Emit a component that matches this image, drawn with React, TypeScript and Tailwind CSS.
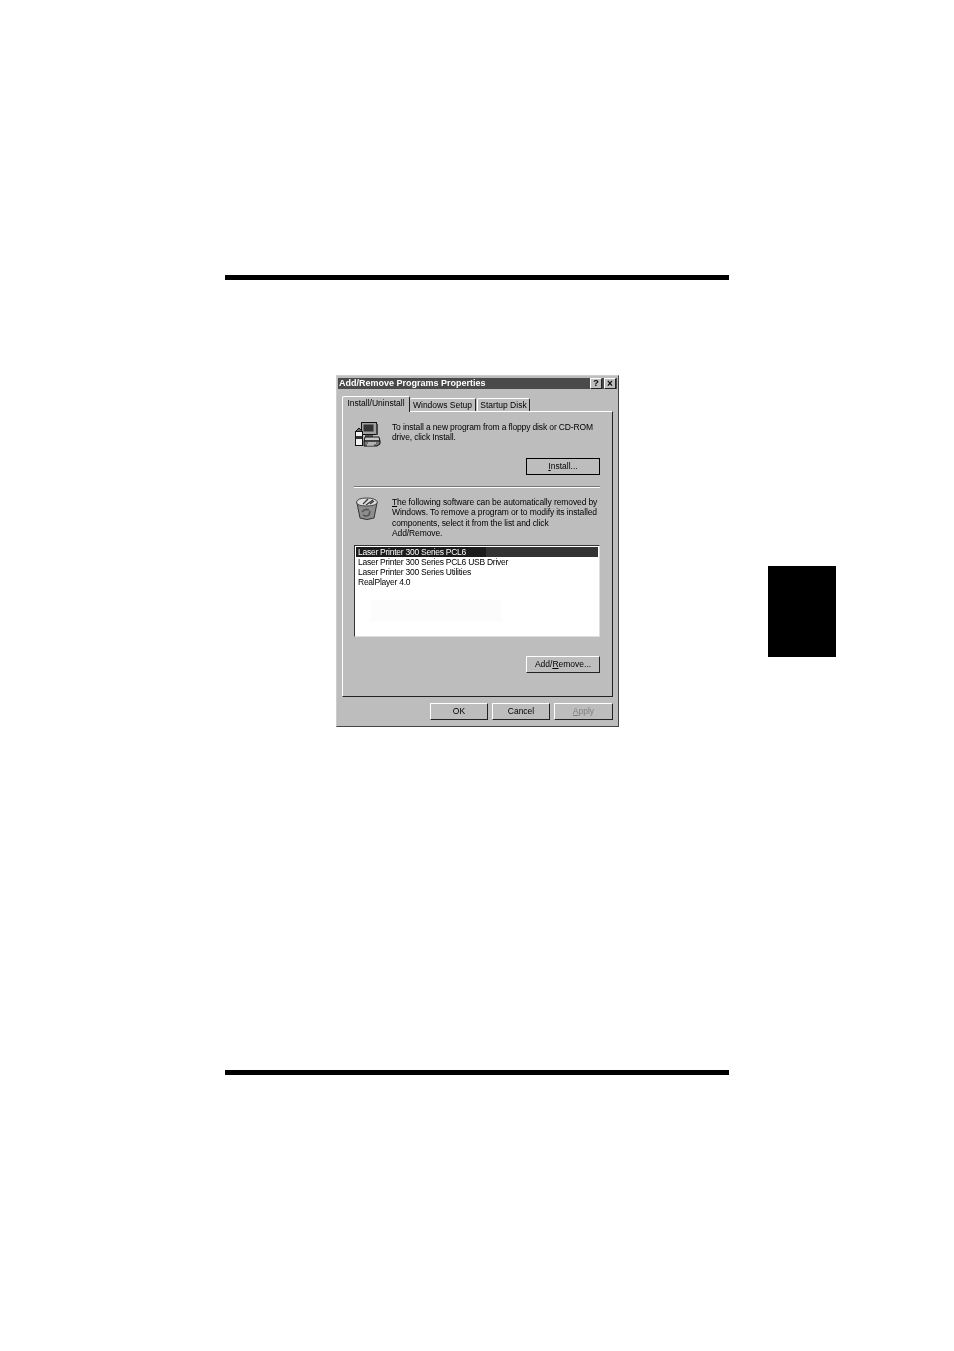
const raised = 'border border-t-white border-l-white border-r-[#222] border-b-[#222] bg-[#bdbdbd]';

function PcIcon() {
  return (
    <svg width="27" height="26" viewBox="0 0 27 26" className="block">
      <rect x="7.5" y="1.5" width="15" height="12" fill="#a0a0a0" stroke="#111" />
      <rect x="9.5" y="3.5" width="10" height="7" fill="#333" />
      <rect x="22" y="3" width="2" height="11" fill="#444" />
      <rect x="11" y="14" width="8" height="2" fill="#555" />
      <path d="M11 16h14l1 4H10z" fill="#c8c8c8" stroke="#111" />
      <path d="M10 20h16v3l-3 2H10z" fill="#777" stroke="#111" />
      <path d="M14 22h8M13 24h7" stroke="#eee" />
      <rect x="1.5" y="10.5" width="7" height="14" fill="#f2f2f2" stroke="#111" />
      <rect x="2" y="15" width="6" height="3" fill="#333" />
      <path d="M2 10l3-3 3 3" fill="#666" stroke="#111" />
    </svg>
  );
}

function BinIcon() {
  return (
    <svg width="24" height="25" viewBox="0 0 24 25" className="block">
      <path d="M2 6l3 15q7 3 14 0l3-15z" fill="#8e8e8e" stroke="#333" />
      <path d="M1.5 5q1-4 10-4t11 4q-1 4-11 4t-10-4z" fill="#dcdcdc" stroke="#444" />
      <path d="M8 7l5-5M11 8l7-5M15 7l4-3" stroke="#333" strokeWidth="1.1" />
      <path d="M7 15q3-4 7-2M15 14l-1 4q-3 2-6 0" fill="none" stroke="#555" strokeWidth="1.6" />
    </svg>
  );
}

function DialogButton({ children, className = '' }: { children: React.ReactNode; className?: string }) {
  return (
    <div className={`h-[17px] flex items-center justify-center text-[8.5px] text-black ${raised} ${className}`}>
      {children}
    </div>
  );
}

function Dialog() {
  return (
    <div className="mt-[95px] ml-[111px] w-[283px] h-[352px] bg-[#bdbdbd] border border-t-[#ccc] border-l-[#ccc] border-r-[#444] border-b-[#444] font-['Liberation_Sans',sans-serif] blur-[0.35px]">
      <div className="h-[11px] mx-[1px] mt-[2px] bg-[#4a4a4a] flex items-center justify-between pl-[1px] pr-[1px]">
        <span className="text-[9px] font-bold text-white leading-none">Add/Remove Programs Properties</span>
        <div className="flex gap-[2px]">
          <div className={`w-[12px] h-[11px] flex items-center justify-center text-[9px] font-bold leading-none text-black ${raised}`}>?</div>
          <div className={`w-[12px] h-[11px] flex items-center justify-center text-[10px] font-bold leading-none text-black ${raised}`}>×</div>
        </div>
      </div>

      <div className="flex items-end h-[22px] pl-[5px]">
        <div className="relative z-10 w-[68px] h-[16px] -mb-[1px] bg-[#bdbdbd] border-t border-l border-white border-r border-r-[#222] rounded-t-[2px] text-[8.5px] text-black flex items-center justify-center pb-[2px] whitespace-nowrap">
          Install/Uninstall
        </div>
        <div className="w-[66px] h-[13px] bg-[#bdbdbd] border-t border-white border-r border-r-[#222] rounded-t-[2px] text-[8.5px] text-black flex items-center justify-center whitespace-nowrap">
          Windows Setup
        </div>
        <div className="w-[53px] h-[13px] ml-[1px] bg-[#bdbdbd] border-t border-l border-white border-r border-r-[#222] rounded-t-[2px] text-[8.5px] text-black flex items-center justify-center whitespace-nowrap">
          Startup Disk
        </div>
      </div>

      <div className={`mx-[5px] h-[286px] pl-[11px] pr-[12px] pt-[9px] flex flex-col ${raised}`}>
        <div className="flex h-[26px]">
          <div className="w-[38px] shrink-0"><PcIcon /></div>
          <p className="text-[8.5px] tracking-[-0.14px] leading-[10.3px] text-black pt-[1px] whitespace-nowrap">
            To install a new program from a floppy disk or CD-ROM<br />drive, click Install.
          </p>
        </div>
        <div className="flex justify-end mt-[11px]">
          <DialogButton className="w-[74px] !border-r-black !border-b-black !border-t-black !border-l-black">
            <span><u>I</u>nstall...</span>
          </DialogButton>
        </div>
        <div className="mt-[11px] h-[2px] border-t border-[#777] border-b border-b-white" />
        <div className="flex mt-[9px]">
          <div className="w-[38px] shrink-0 pl-[1px]"><BinIcon /></div>
          <p className="text-[8.5px] tracking-[-0.11px] leading-[10.3px] text-black whitespace-nowrap">
            <u>T</u>he following software can be automatically removed by<br />
            Windows. To remove a program or to modify its installed<br />
            components, select it from the list and click<br />
            Add/Remove.
          </p>
        </div>
        <div className="relative mt-[7px] h-[92px] bg-white border border-t-[#333] border-l-[#333] border-r-[#ddd] border-b-[#ddd] pt-[1px] px-[1px] text-[8.5px] tracking-[-0.25px] text-black leading-[10px]">
          <div className="bg-[#1c1c1c] text-white pl-[2px] h-[10px] leading-[10px] border-r-[112px] border-r-[#333]">Laser Printer 300 Series PCL6</div>
          <div className="pl-[2px]">Laser Printer 300 Series PCL6 USB Driver</div>
          <div className="pl-[2px]">Laser Printer 300 Series Utilities</div>
          <div className="pl-[2px]">RealPlayer 4.0</div>
          <div className="absolute left-[15px] top-[54px] w-[132px] h-[22px] bg-[#fcfcfc]" />
        </div>
        <div className="flex justify-end mt-[19px]">
          <DialogButton className="w-[74px]">
            <span>Add/<u>R</u>emove...</span>
          </DialogButton>
        </div>
      </div>

      <div className="flex justify-end gap-[4px] mt-[6px] mr-[5px]">
        <DialogButton className="w-[58px]">OK</DialogButton>
        <DialogButton className="w-[58px]">Cancel</DialogButton>
        <DialogButton className="w-[59px] !text-[#808080]"><span><u>A</u>pply</span></DialogButton>
      </div>
    </div>
  );
}

export default function App() {
  return (
    <div className="flex w-[954px] h-[1351px] bg-white overflow-hidden">
      <div className="ml-[225px] w-[504px] pt-[275px] flex flex-col">
        <div className="h-[5px] bg-black" />
        <Dialog />
        <div className="mt-[343px] h-[5px] bg-black" />
      </div>
      <div className="ml-[39px] mt-[566px] w-[68px] h-[91px] bg-black" />
    </div>
  );
}
